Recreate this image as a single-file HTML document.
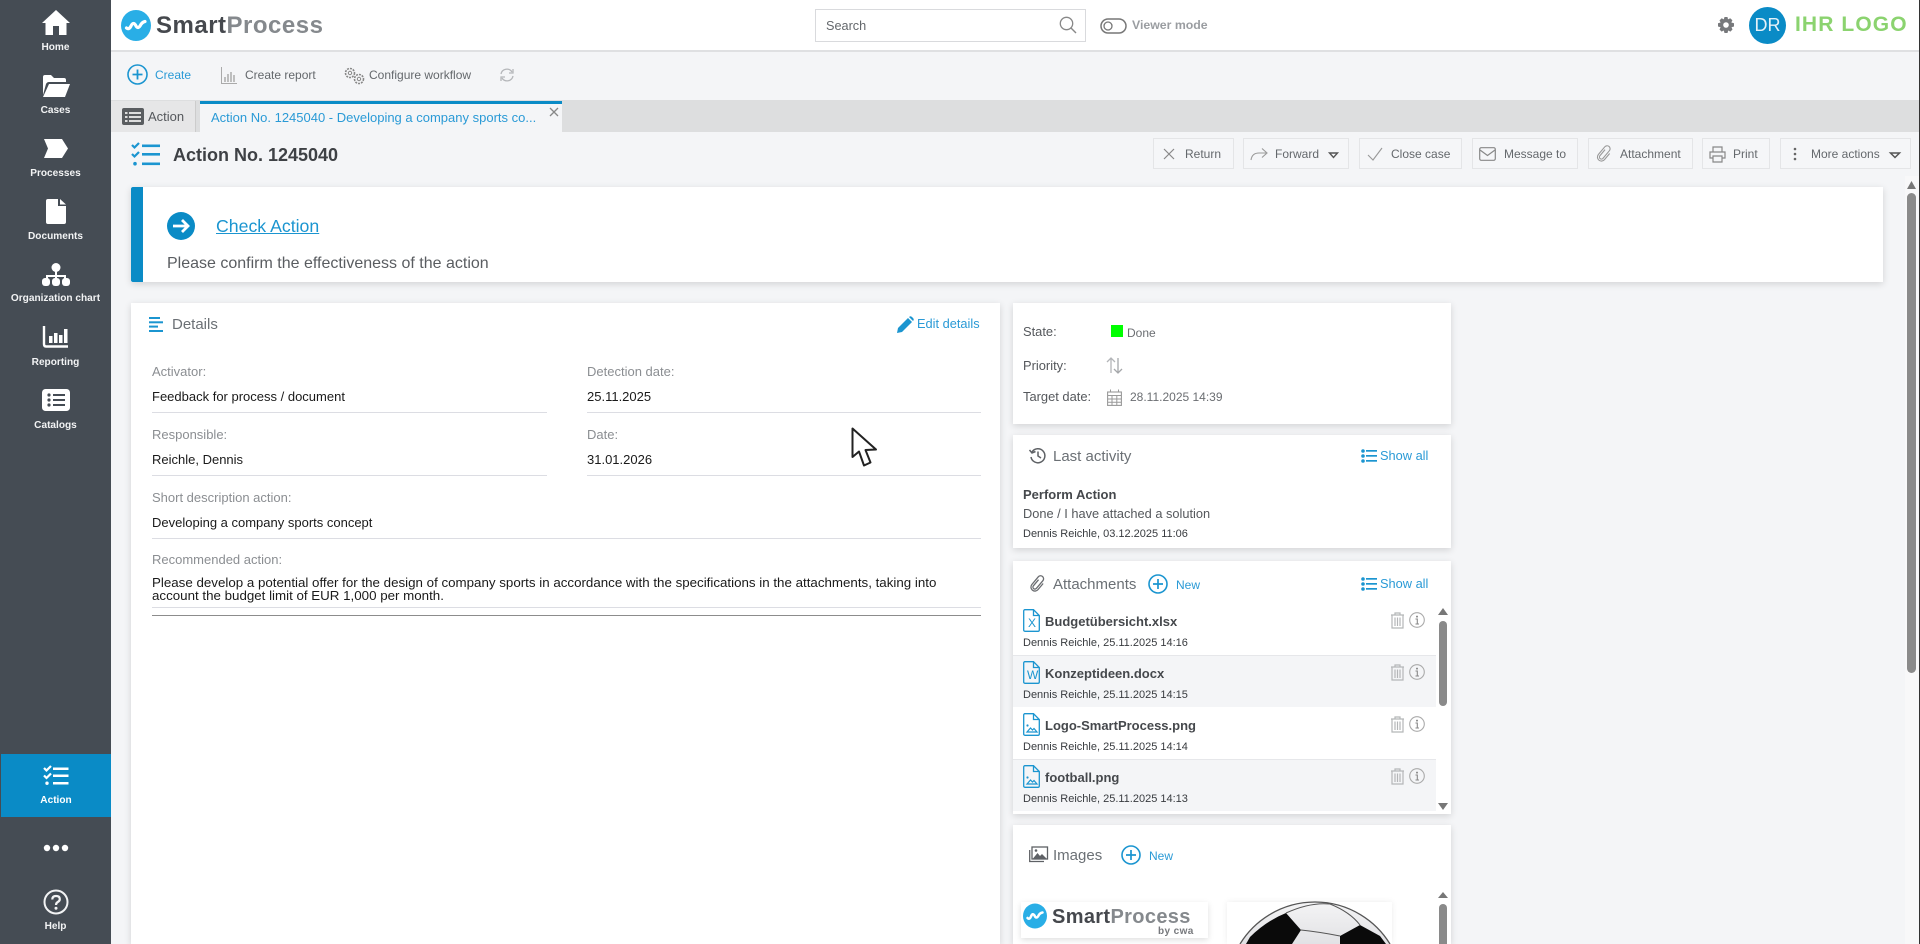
<!DOCTYPE html>
<html><head><meta charset="utf-8"><title>SmartProcess</title>
<style>
html,body{margin:0;padding:0;width:1920px;height:944px;overflow:hidden;background:#f4f5f7;font-family:"Liberation Sans",sans-serif}
#root{position:relative;width:1920px;height:944px;overflow:hidden;background:#f4f5f7}
.t{position:absolute;white-space:nowrap;line-height:16px;height:16px}
.b{position:absolute}
svg{position:absolute;overflow:visible}
.nav{position:absolute;left:0;width:111px;text-align:center;color:#f2f3f4;font-size:10.1px;font-weight:bold;line-height:14px;white-space:nowrap}
.card{position:absolute;background:#fff;box-shadow:0 2px 7px rgba(0,0,0,.14)}
.btn{position:absolute;top:138px;height:31px;border:1px solid #e4e5e7;box-sizing:border-box;background:#f5f6f8}
.l{font-size:13px;color:#8b8e92}
.v{font-size:13px;color:#1a1a1a}
.hr{position:absolute;height:1px;background:#dcdde3}
.bt{font-size:12px;color:#64686c}
.lnk{color:#2a9ad6}
.ttl{font-size:15px;color:#6b7075}
.meta{font-size:11px;color:#383b3f}
.nm{font-size:13px;font-weight:bold;color:#45484c}
.lab{font-size:12.9px;color:#55585c}
</style></head><body><div id="root">

<!-- sidebar -->
<div class="b" style="left:0;top:0;width:111px;height:944px;background:#454c54"></div>
<div class="b" style="left:1px;top:754px;width:110px;height:63px;background:#0a8bc6"></div>

<svg style="left:42px;top:10px" width="28" height="25" viewBox="0 0 28 25"><path d="M14 0 L28 13 L24.5 13 V25 H17 V16 H11 V25 H3.5 V13 H0 Z" fill="#fff"/></svg>
<div class="nav" style="top:41px">Home</div>
<svg style="left:42px;top:75px" width="28" height="22" viewBox="0 0 28 22"><path d="M1 20 V2 Q1 0 3 0 H9 L12 3 H22 Q24 3 24 5 V7 H7 Q5 7 4 9 Z" fill="#fff"/><path d="M7 9 H28 L23 22 H1 Z" fill="#fff"/></svg>
<div class="nav" style="top:104px">Cases</div>
<svg style="left:44px;top:139px" width="24" height="19" viewBox="0 0 24 19"><path d="M0 0 H18 L24 9.5 L18 19 H0 L4 9.5 Z" fill="#fff"/></svg>
<div class="nav" style="top:167px">Processes</div>
<svg style="left:46px;top:199px" width="20" height="25" viewBox="0 0 20 25"><path d="M2 0 H12 V7 H20 V23 Q20 25 18 25 H2 Q0 25 0 23 V2 Q0 0 2 0Z M14 0 L20 5.5 H14Z" fill="#fff"/></svg>
<div class="nav" style="top:230px">Documents</div>
<svg style="left:42px;top:263px" width="28" height="23" viewBox="0 0 28 23"><circle cx="14" cy="4.5" r="4.5" fill="#fff"/><path d="M13 8 H15 V12 H24 V16 H22 V14 H15 V16 H13 V14 H6 V16 H4 V12 H13Z" fill="#fff"/><rect x="0" y="15" width="8" height="8" rx="3" fill="#fff"/><rect x="10" y="15" width="8" height="8" rx="3" fill="#fff"/><rect x="20" y="15" width="8" height="8" rx="3" fill="#fff"/></svg>
<div class="nav" style="top:292px">Organization chart</div>
<svg style="left:43px;top:326px" width="25" height="22" viewBox="0 0 25 22"><path d="M1 0 V18 Q1 20.5 3 20.5 H25" fill="none" stroke="#fff" stroke-width="2.4"/><rect x="6" y="10" width="3.5" height="7" fill="#fff"/><rect x="11" y="7" width="3.5" height="10" fill="#fff"/><rect x="16" y="9" width="3.5" height="8" fill="#fff"/><rect x="21" y="3" width="3.5" height="14" fill="#fff"/></svg>
<div class="nav" style="top:356px">Reporting</div>
<svg style="left:42px;top:389px" width="28" height="22" viewBox="0 0 28 22"><rect width="28" height="22" rx="3.5" fill="#fff"/><g fill="#454c54"><circle cx="7" cy="6" r="1.6"/><circle cx="7" cy="11" r="1.6"/><circle cx="7" cy="16" r="1.6"/><rect x="11" y="5" width="12" height="2"/><rect x="11" y="10" width="12" height="2"/><rect x="11" y="15" width="12" height="2"/></g></svg>
<div class="nav" style="top:419px">Catalogs</div>

<svg style="left:43px;top:765px" width="26" height="21" viewBox="0 0 26 21"><g fill="none" stroke="#fff" stroke-width="2.2"><path d="M1 3 L3.5 5.5 L8 1"/><path d="M1 10.5 L3.5 13 L8 8.5"/></g><g fill="#fff"><rect x="10" y="2.5" width="15.5" height="2.5"/><rect x="10" y="9.5" width="15.5" height="2.5"/><rect x="10" y="17" width="15.5" height="2.5"/><circle cx="4" cy="18.2" r="1.7"/></g></svg>
<div class="nav" style="top:794px;color:#fff;left:1px;width:110px">Action</div>
<svg style="left:43px;top:843px" width="26" height="10" viewBox="0 0 26 10"><circle cx="4" cy="5" r="3.2" fill="#fff"/><circle cx="13" cy="5" r="3.2" fill="#fff"/><circle cx="22" cy="5" r="3.2" fill="#fff"/></svg>
<svg style="left:43px;top:889px" width="26" height="26" viewBox="0 0 26 26"><circle cx="13" cy="13" r="11.5" fill="none" stroke="#f2f3f4" stroke-width="2"/><path d="M9.3 10.5 Q9.3 7 13 7 Q16.8 7 16.8 10 Q16.8 12 14.8 13 Q13 14 13 16" fill="none" stroke="#f2f3f4" stroke-width="2.2"/><circle cx="13" cy="19.3" r="1.5" fill="#f2f3f4"/></svg>
<div class="nav" style="top:920px">Help</div>

<!-- header -->
<div class="b" style="left:111px;top:0;width:1809px;height:50px;background:#fff"></div>
<div class="b" style="left:111px;top:50px;width:1809px;height:2px;background:#dfe0e2"></div>
<svg style="left:121px;top:10px" width="30" height="31" viewBox="0 0 30 31"><ellipse cx="15" cy="15.5" rx="15" ry="15.5" fill="#29aee6"/><path d="M5.5 18 Q8 20 10 16 Q12 11.5 14.5 15 Q16.5 19.5 19 16 Q21 12 24 11.5" fill="none" stroke="#fff" stroke-width="3.2" stroke-linecap="round"/></svg>
<div class="t" style="left:156px;top:14px;height:24px;line-height:24px;font-size:24px;font-weight:bold;color:#45484d;letter-spacing:.5px">Smart<span style="color:#85898d">Process</span></div>

<div class="b" style="left:815px;top:9px;width:271px;height:33px;box-sizing:border-box;border:1px solid #d9dadd;background:#fff"></div>
<div class="t" style="left:826px;top:18px;font-size:12.7px;color:#64686c">Search</div>
<svg style="left:1059px;top:16px" width="18" height="18" viewBox="0 0 18 18"><circle cx="7.5" cy="7.5" r="6.2" fill="none" stroke="#888" stroke-width="1.3"/><path d="M12 12 L17 17" stroke="#888" stroke-width="1.4"/></svg>
<svg style="left:1100px;top:18px" width="27" height="16" viewBox="0 0 27 16"><rect x="1" y="1" width="25" height="14" rx="7" fill="none" stroke="#777" stroke-width="1.5"/><circle cx="8" cy="8" r="4" fill="none" stroke="#777" stroke-width="1.3"/></svg>
<div class="t" style="left:1132px;top:17px;font-size:12.3px;font-weight:bold;color:#9a9da1">Viewer mode</div>

<svg style="left:1718px;top:17px" width="16" height="16" viewBox="0 0 16 16"><path d="M6.5 0 H9.5 L10 2.4 L12.2 1.2 L14.4 3.3 L13.3 5.5 L16 6.2 V9.5 L13.5 10.2 L14.5 12.5 L12.4 14.6 L10.2 13.5 L9.5 16 H6.5 L5.8 13.5 L3.6 14.6 L1.5 12.5 L2.6 10.2 L0 9.5 V6.3 L2.6 5.5 L1.5 3.4 L3.7 1.2 L5.8 2.4Z" fill="#77797c"/><circle cx="8" cy="8" r="2.8" fill="#fff"/></svg>
<div class="b" style="left:1749px;top:7px;width:37px;height:37px;border-radius:50%;background:#0a8bc6;color:#e4f1f8;font-size:18px;line-height:37px;text-align:center">DR</div>
<div class="t" style="left:1795px;top:13px;height:24px;line-height:24px;font-size:21px;font-weight:bold;color:#8bd36f;letter-spacing:1.1px">IHR LOGO</div>
<div class="b" style="left:1919px;top:0;width:1px;height:944px;background:#333;z-index:9"></div>

<!-- toolbar -->
<svg style="left:127px;top:64px" width="21" height="21" viewBox="0 0 21 21"><circle cx="10.5" cy="10.5" r="9.5" fill="none" stroke="#1b95d0" stroke-width="1.6"/><path d="M10.5 5.5 V15.5 M5.5 10.5 H15.5" stroke="#1b95d0" stroke-width="1.8"/></svg>
<div class="t lnk" style="left:155px;top:67px;font-size:12px">Create</div>
<svg style="left:221px;top:67px" width="16" height="17" viewBox="0 0 16 17"><path d="M.5 0 V16.5 H16" fill="none" stroke="#aaa" stroke-width="1"/><path d="M4 15 V10 M7 15 V7 M10 15 V5 M13 15 V8" stroke="#999" stroke-width="1.2"/></svg>
<div class="t bt" style="left:245px;top:67px">Create report</div>
<svg style="left:344px;top:67px" width="22" height="18" viewBox="0 0 22 18"><circle cx="6" cy="6" r="4.5" fill="none" stroke="#888" stroke-width="1.6" stroke-dasharray="2 1"/><circle cx="6" cy="6" r="1.7" fill="none" stroke="#888"/><circle cx="15" cy="12" r="4.5" fill="none" stroke="#888" stroke-width="1.6" stroke-dasharray="2 1"/><circle cx="15" cy="12" r="1.7" fill="none" stroke="#888"/></svg>
<div class="t bt" style="left:369px;top:67px">Configure workflow</div>
<svg style="left:500px;top:68px" width="14" height="14" viewBox="0 0 14 14"><path d="M1 6 A6 6 0 0 1 12 4 M13 8 A6 6 0 0 1 2 10" fill="none" stroke="#b5b7ba" stroke-width="1.3"/><path d="M13 1 V5 H9 M1 13 V9 H5" fill="none" stroke="#b5b7ba" stroke-width="1.3"/></svg>

<!-- tabs -->
<div class="b" style="left:111px;top:100px;width:1809px;height:32px;background:#dddedf"></div>
<div class="b" style="left:111px;top:101px;width:84px;height:31px;background:#e6e6e7;border-right:1px solid #ccc"></div>
<svg style="left:122px;top:108px" width="23" height="18" viewBox="0 0 23 18"><rect width="22" height="17" rx="2" fill="#5a5d60"/><g fill="#ddd"><rect x="3" y="4" width="2.5" height="2"/><rect x="3" y="8" width="2.5" height="2"/><rect x="3" y="12" width="2.5" height="2"/><rect x="7" y="4" width="12" height="2"/><rect x="7" y="8" width="12" height="2"/><rect x="7" y="12" width="12" height="2"/></g></svg>
<div class="t" style="left:148px;top:109px;font-size:13px;color:#55585c">Action</div>
<div class="b" style="left:200px;top:101px;width:362px;height:31px;background:#f4f5f7;border-top:3px solid #0a8bc6;box-sizing:border-box"></div>
<div class="t lnk" style="left:211px;top:110px;font-size:13px">Action No. 1245040 - Developing a company sports co...</div>
<svg style="left:549px;top:107px" width="10" height="10" viewBox="0 0 10 10"><path d="M1 1 L9 9 M9 1 L1 9" stroke="#888" stroke-width="1.3"/></svg>

<!-- title -->
<svg style="left:131px;top:142px" width="29" height="24" viewBox="0 0 29 24"><g fill="none" stroke="#1b95d0" stroke-width="2.2"><path d="M1 3 L3.5 5.5 L8 1"/><path d="M1 12 L3.5 14.5 L8 10"/></g><g fill="#1b95d0"><rect x="11" y="2.5" width="18" height="2.6"/><rect x="11" y="11" width="18" height="2.6"/><rect x="11" y="20.5" width="18" height="2.6"/><circle cx="4" cy="21.7" r="1.8"/></g></svg>
<div class="t" style="left:173px;top:145px;height:20px;line-height:20px;font-size:18px;font-weight:bold;color:#3e4145">Action No. 1245040</div>

<!-- action buttons -->
<div class="btn" style="left:1153px;width:81px"></div>
<svg style="left:1163px;top:148px" width="12" height="12" viewBox="0 0 12 12"><path d="M1 1 L11 11 M11 1 L1 11" stroke="#888" stroke-width="1.2"/></svg>
<div class="t bt" style="left:1185px;top:146px">Return</div>
<div class="btn" style="left:1243px;width:106px"></div>
<svg style="left:1250px;top:147px" width="18" height="14" viewBox="0 0 18 14"><path d="M1 13 Q2 6 9 6 H16 M12 1.5 L17 6 L12 10.5" fill="none" stroke="#999" stroke-width="1.1"/></svg>
<div class="t bt" style="left:1275px;top:146px">Forward</div>
<svg style="left:1328px;top:152px" width="11" height="7" viewBox="0 0 11 7"><path d="M1.5 1 H9.5 L5.5 5.5Z" fill="none" stroke="#555" stroke-width="1.4"/></svg>
<div class="btn" style="left:1359px;width:103px"></div>
<svg style="left:1367px;top:147px" width="16" height="14" viewBox="0 0 16 14"><path d="M1 8 L6 13 L15 1" fill="none" stroke="#999" stroke-width="1.1"/></svg>
<div class="t bt" style="left:1391px;top:146px">Close case</div>
<div class="btn" style="left:1472px;width:106px"></div>
<svg style="left:1479px;top:147px" width="17" height="14" viewBox="0 0 17 14"><rect x=".7" y=".7" width="15.6" height="12.6" rx="1.5" fill="none" stroke="#888" stroke-width="1.2"/><path d="M1 3 L8.5 8.5 L16 3" fill="none" stroke="#888" stroke-width="1.2"/></svg>
<div class="t bt" style="left:1504px;top:146px">Message to</div>
<div class="btn" style="left:1588px;width:105px"></div>
<svg style="left:1598px;top:145px" width="12" height="18" viewBox="0 0 12 18"><path transform="rotate(40 6 9)" d="M4 5 V13 a2 2 0 0 0 4 0 V3 a3 3 0 0 0 -6 0 V13 a4 4 0 0 0 8 0 V5" fill="none" stroke="#999" stroke-width="1.1"/></svg>
<div class="t bt" style="left:1620px;top:146px">Attachment</div>
<div class="btn" style="left:1702px;width:68px"></div>
<svg style="left:1709px;top:146px" width="17" height="17" viewBox="0 0 17 17"><path d="M4 6 V1 H13 V6 M4 12 H1 V6 H16 V12 H13 M4 10 H13 V16 H4Z" fill="none" stroke="#888" stroke-width="1.2"/></svg>
<div class="t bt" style="left:1733px;top:146px">Print</div>
<div class="btn" style="left:1780px;width:131px"></div>
<svg style="left:1793px;top:147px" width="4" height="14" viewBox="0 0 4 14"><circle cx="2" cy="2" r="1.3" fill="#666"/><circle cx="2" cy="7" r="1.3" fill="#666"/><circle cx="2" cy="12" r="1.3" fill="#666"/></svg>
<div class="t bt" style="left:1811px;top:146px">More actions</div>
<svg style="left:1889px;top:152px" width="12" height="7" viewBox="0 0 12 7"><path d="M1.5 1 H10.5 L6 5.5Z" fill="none" stroke="#555" stroke-width="1.5"/></svg>

<!-- outer scrollbar -->
<div class="b" style="left:1905px;top:176px;width:14px;height:768px;background:#f8f8f9"></div>
<svg style="left:1907px;top:181px" width="9" height="8" viewBox="0 0 9 8"><path d="M4.5 0 L9 8 H0Z" fill="#777"/></svg>
<div class="b" style="left:1907px;top:193px;width:9px;height:480px;border-radius:5px;background:#8a8a8a"></div>

<!-- banner -->
<div class="card" style="left:131px;top:187px;width:1752px;height:95px"></div>
<div class="b" style="left:131px;top:187px;width:12px;height:95px;background:#0a8bc6;border-radius:2px 0 0 2px"></div>
<svg style="left:167px;top:212px" width="28" height="28" viewBox="0 0 28 28"><circle cx="14" cy="14" r="14" fill="#0a8bc6"/><path d="M6 14 H21 M15 8 L21 14 L15 20" fill="none" stroke="#fff" stroke-width="2.8"/></svg>
<div class="t" style="left:216px;top:216px;height:20px;line-height:20px;font-size:17.7px;color:#1b95d0;text-decoration:underline">Check Action</div>
<div class="t" style="left:167px;top:256px;font-size:16px;color:#5a5d61">Please confirm the effectiveness of the action</div>

<!-- details card -->
<div class="card" style="left:131px;top:303px;width:869px;height:641px"></div>
<svg style="left:149px;top:317px" width="15" height="15" viewBox="0 0 15 15"><g fill="#1b95d0"><rect width="11" height="2"/><rect y="4.3" width="14" height="2"/><rect y="8.6" width="9" height="2"/><rect y="13" width="14" height="2"/></g></svg>
<div class="t ttl" style="left:172px;top:317px">Details</div>
<svg style="left:897px;top:316px" width="17" height="17" viewBox="0 0 17 17"><path d="M0 17 L1 12 L11 2 L15 6 L5 16Z M12 1 Q13.5 -.5 15 1 L16 2 Q17.5 3.5 16 5 Z" fill="#1b95d0"/></svg>
<div class="t lnk" style="left:917px;top:316px;font-size:12.8px">Edit details</div>

<div class="t l" style="left:152px;top:364px">Activator:</div>
<div class="t v" style="left:152px;top:389px">Feedback for process / document</div>
<div class="hr" style="left:152px;top:412px;width:395px"></div>
<div class="t l" style="left:587px;top:364px">Detection date:</div>
<div class="t v" style="left:587px;top:389px">25.11.2025</div>
<div class="hr" style="left:587px;top:412px;width:394px"></div>

<div class="t l" style="left:152px;top:427px">Responsible:</div>
<div class="t v" style="left:152px;top:452px">Reichle, Dennis</div>
<div class="hr" style="left:152px;top:475px;width:395px"></div>
<div class="t l" style="left:587px;top:427px">Date:</div>
<div class="t v" style="left:587px;top:452px">31.01.2026</div>
<div class="hr" style="left:587px;top:475px;width:394px"></div>

<div class="t l" style="left:152px;top:490px">Short description action:</div>
<div class="t v" style="left:152px;top:515px">Developing a company sports concept</div>
<div class="hr" style="left:152px;top:538px;width:829px"></div>

<div class="t l" style="left:152px;top:552px">Recommended action:</div>
<div class="t v" style="left:152px;top:575px;font-size:13.33px">Please develop a potential offer for the design of company sports in accordance with the specifications in the attachments, taking into</div>
<div class="t v" style="left:152px;top:588px;font-size:13.33px">account the budget limit of EUR 1,000 per month.</div>
<div class="hr" style="left:152px;top:607px;width:829px"></div>
<div class="hr" style="left:152px;top:615px;width:829px;background:#8c8c8c"></div>

<!-- cursor -->
<svg style="left:851px;top:427px;z-index:5" width="27" height="41" viewBox="0 0 27 41"><path d="M1.5 1.5 V30 L8 24.5 L13 38.5 L19.5 35.5 L14.5 23 L25 22.5 Z" fill="#fff" stroke="#222" stroke-width="2" stroke-linejoin="round"/></svg>

<!-- state card -->
<div class="card" style="left:1013px;top:303px;width:438px;height:121px"></div>
<div class="t lab" style="left:1023px;top:324px">State:</div>
<div class="b" style="left:1111px;top:325px;width:12px;height:12px;background:#00ff00"></div>
<div class="t" style="left:1127px;top:325px;font-size:12px;color:#6b6e72">Done</div>
<div class="t lab" style="left:1023px;top:358px">Priority:</div>
<svg style="left:1106px;top:357px" width="17" height="17" viewBox="0 0 17 17"><path d="M5 16 V1 M1 5 L5 1 L9 5" fill="none" stroke="#b3b5b8" stroke-width="1.3"/><path d="M12 1 V16 M8 12 L12 16 L16 12" fill="none" stroke="#a5a7aa" stroke-width="1.3"/></svg>
<div class="t lab" style="left:1023px;top:389px">Target date:</div>
<svg style="left:1107px;top:389px" width="15" height="17" viewBox="0 0 15 17"><rect x=".6" y="3" width="13.8" height="13.4" fill="none" stroke="#999" stroke-width="1.1"/><path d="M.6 6.5 H14.4 M.6 10 H14.4 M.6 13.3 H14.4 M5 6.5 V16.4 M9.8 6.5 V16.4 M3.5 .5 V3.5 M11.5 .5 V3.5" fill="none" stroke="#999" stroke-width="1"/></svg>
<div class="t" style="left:1130px;top:389px;font-size:12px;color:#6b6e72">28.11.2025 14:39</div>

<!-- last activity -->
<div class="card" style="left:1013px;top:435px;width:438px;height:113px"></div>
<svg style="left:1029px;top:447px" width="17" height="17" viewBox="0 0 17 17"><path d="M3 5 A7 7 0 1 1 2 10" fill="none" stroke="#5e6165" stroke-width="1.5"/><path d="M.5 3 L3 6 L6.5 4.5" fill="none" stroke="#5e6165" stroke-width="1.5"/><path d="M9 4.5 V9 L12 11" fill="none" stroke="#5e6165" stroke-width="1.5"/></svg>
<div class="t ttl" style="left:1053px;top:449px">Last activity</div>
<svg style="left:1361px;top:449px" width="16" height="14" viewBox="0 0 16 14"><g fill="#1b95d0"><circle cx="2" cy="2" r="1.8"/><circle cx="2" cy="7" r="1.8"/><circle cx="2" cy="12" r="1.8"/><rect x="5" y="1" width="11" height="1.7"/><rect x="5" y="6" width="11" height="1.7"/><rect x="5" y="11" width="11" height="1.7"/></g></svg>
<div class="t lnk" style="left:1380px;top:448px;font-size:12.8px">Show all</div>
<div class="t nm" style="left:1023px;top:487px;color:#45484c">Perform Action</div>
<div class="t" style="left:1023px;top:506px;font-size:12.8px;color:#55585c">Done / I have attached a solution</div>
<div class="t meta" style="left:1023px;top:526px">Dennis Reichle, 03.12.2025 11:06</div>

<!-- attachments -->
<div class="card" style="left:1013px;top:561px;width:438px;height:253px"></div>
<svg style="left:1031px;top:575px" width="13" height="18" viewBox="0 0 12 18"><path transform="rotate(40 6 9)" d="M4 5 V13 a2 2 0 0 0 4 0 V3 a3 3 0 0 0 -6 0 V13 a4 4 0 0 0 8 0 V5" fill="none" stroke="#6a6c70" stroke-width="1.3"/></svg>
<div class="t ttl" style="left:1053px;top:577px">Attachments</div>
<svg style="left:1148px;top:574px" width="20" height="20" viewBox="0 0 20 20"><circle cx="10" cy="10" r="9" fill="none" stroke="#1b95d0" stroke-width="1.6"/><path d="M10 5 V15 M5 10 H15" stroke="#1b95d0" stroke-width="1.7"/></svg>
<div class="t lnk" style="left:1176px;top:577px;font-size:12px">New</div>
<svg style="left:1361px;top:577px" width="16" height="14" viewBox="0 0 16 14"><g fill="#1b95d0"><circle cx="2" cy="2" r="1.8"/><circle cx="2" cy="7" r="1.8"/><circle cx="2" cy="12" r="1.8"/><rect x="5" y="1" width="11" height="1.7"/><rect x="5" y="6" width="11" height="1.7"/><rect x="5" y="11" width="11" height="1.7"/></g></svg>
<div class="t lnk" style="left:1380px;top:576px;font-size:12.8px">Show all</div>

<div class="b" style="left:1013px;top:655px;width:423px;height:52px;background:#f4f5f7;border-top:1px solid #e6e7ea;box-sizing:border-box"></div>
<div class="b" style="left:1013px;top:759px;width:423px;height:52px;background:#f4f5f7;border-top:1px solid #e6e7ea;box-sizing:border-box"></div>

<svg style="left:1023px;top:609px" width="17" height="23" viewBox="0 0 17 23"><path d="M1.5 .7 H10.5 L16.3 6.5 V21 Q16.3 22.3 15 22.3 H2 Q.7 22.3 .7 21 V2 Q.7 .7 2 .7Z M10.5 .7 V6.5 H16.3" fill="none" stroke="#1b95d0" stroke-width="1.3"/></svg>
<div class="t" style="left:1027px;top:615px;font-size:12px;color:#1b95d0;width:10px;text-align:center">X</div>
<div class="t nm" style="left:1045px;top:614px">Budgetübersicht.xlsx</div>
<div class="t meta" style="left:1023px;top:635px">Dennis Reichle, 25.11.2025 14:16</div>

<svg style="left:1023px;top:661px" width="17" height="23" viewBox="0 0 17 23"><path d="M1.5 .7 H10.5 L16.3 6.5 V21 Q16.3 22.3 15 22.3 H2 Q.7 22.3 .7 21 V2 Q.7 .7 2 .7Z M10.5 .7 V6.5 H16.3" fill="none" stroke="#1b95d0" stroke-width="1.3"/></svg>
<div class="t" style="left:1027px;top:667px;font-size:12px;color:#1b95d0;width:10px;text-align:center">W</div>
<div class="t nm" style="left:1045px;top:666px">Konzeptideen.docx</div>
<div class="t meta" style="left:1023px;top:687px">Dennis Reichle, 25.11.2025 14:15</div>

<svg style="left:1023px;top:713px" width="17" height="23" viewBox="0 0 17 23"><path d="M1.5 .7 H10.5 L16.3 6.5 V21 Q16.3 22.3 15 22.3 H2 Q.7 22.3 .7 21 V2 Q.7 .7 2 .7Z M10.5 .7 V6.5 H16.3" fill="none" stroke="#1b95d0" stroke-width="1.3"/><path d="M4 19 L7.5 15 L9.5 17 L11 15.5 L14 19Z" fill="none" stroke="#1b95d0" stroke-width="1.2"/><circle cx="4.5" cy="12.5" r="1.1" fill="#1b95d0"/></svg>
<div class="t nm" style="left:1045px;top:718px">Logo-SmartProcess.png</div>
<div class="t meta" style="left:1023px;top:739px">Dennis Reichle, 25.11.2025 14:14</div>

<svg style="left:1023px;top:765px" width="17" height="23" viewBox="0 0 17 23"><path d="M1.5 .7 H10.5 L16.3 6.5 V21 Q16.3 22.3 15 22.3 H2 Q.7 22.3 .7 21 V2 Q.7 .7 2 .7Z M10.5 .7 V6.5 H16.3" fill="none" stroke="#1b95d0" stroke-width="1.3"/><path d="M4 19 L7.5 15 L9.5 17 L11 15.5 L14 19Z" fill="none" stroke="#1b95d0" stroke-width="1.2"/><circle cx="4.5" cy="12.5" r="1.1" fill="#1b95d0"/></svg>
<div class="t nm" style="left:1045px;top:770px">football.png</div>
<div class="t meta" style="left:1023px;top:791px">Dennis Reichle, 25.11.2025 14:13</div>

<!-- row actions -->
<svg style="left:1390px;top:612px" width="15" height="17" viewBox="0 0 15 17"><path d="M1 3 H14 M5 3 V1 H10 V3 M2 3 V16 H13 V3 M5 5.5 V14 M7.5 5.5 V14 M10 5.5 V14" fill="none" stroke="#b4b6b8" stroke-width="1.2"/></svg>
<svg style="left:1409px;top:612px" width="16" height="16" viewBox="0 0 16 16"><circle cx="8" cy="8" r="7.3" fill="none" stroke="#aaa" stroke-width="1.1"/><circle cx="8" cy="4.6" r="1" fill="#888"/><path d="M6.5 7 H8.3 V12 M6.5 12 H10" fill="none" stroke="#888" stroke-width="1.1"/></svg>
<svg style="left:1390px;top:664px" width="15" height="17" viewBox="0 0 15 17"><path d="M1 3 H14 M5 3 V1 H10 V3 M2 3 V16 H13 V3 M5 5.5 V14 M7.5 5.5 V14 M10 5.5 V14" fill="none" stroke="#b4b6b8" stroke-width="1.2"/></svg>
<svg style="left:1409px;top:664px" width="16" height="16" viewBox="0 0 16 16"><circle cx="8" cy="8" r="7.3" fill="none" stroke="#aaa" stroke-width="1.1"/><circle cx="8" cy="4.6" r="1" fill="#888"/><path d="M6.5 7 H8.3 V12 M6.5 12 H10" fill="none" stroke="#888" stroke-width="1.1"/></svg>
<svg style="left:1390px;top:716px" width="15" height="17" viewBox="0 0 15 17"><path d="M1 3 H14 M5 3 V1 H10 V3 M2 3 V16 H13 V3 M5 5.5 V14 M7.5 5.5 V14 M10 5.5 V14" fill="none" stroke="#b4b6b8" stroke-width="1.2"/></svg>
<svg style="left:1409px;top:716px" width="16" height="16" viewBox="0 0 16 16"><circle cx="8" cy="8" r="7.3" fill="none" stroke="#aaa" stroke-width="1.1"/><circle cx="8" cy="4.6" r="1" fill="#888"/><path d="M6.5 7 H8.3 V12 M6.5 12 H10" fill="none" stroke="#888" stroke-width="1.1"/></svg>
<svg style="left:1390px;top:768px" width="15" height="17" viewBox="0 0 15 17"><path d="M1 3 H14 M5 3 V1 H10 V3 M2 3 V16 H13 V3 M5 5.5 V14 M7.5 5.5 V14 M10 5.5 V14" fill="none" stroke="#b4b6b8" stroke-width="1.2"/></svg>
<svg style="left:1409px;top:768px" width="16" height="16" viewBox="0 0 16 16"><circle cx="8" cy="8" r="7.3" fill="none" stroke="#aaa" stroke-width="1.1"/><circle cx="8" cy="4.6" r="1" fill="#888"/><path d="M6.5 7 H8.3 V12 M6.5 12 H10" fill="none" stroke="#888" stroke-width="1.1"/></svg>

<!-- attachments scrollbar -->
<svg style="left:1438px;top:608px" width="10" height="7" viewBox="0 0 10 7"><path d="M5 0 L10 7 H0Z" fill="#777"/></svg>
<div class="b" style="left:1439px;top:621px;width:8px;height:85px;border-radius:4px;background:#8a8a8a"></div>
<svg style="left:1438px;top:803px" width="10" height="7" viewBox="0 0 10 7"><path d="M0 0 H10 L5 7Z" fill="#777"/></svg>

<!-- images -->
<div class="card" style="left:1013px;top:825px;width:438px;height:119px"></div>
<svg style="left:1029px;top:846px" width="19" height="17" viewBox="0 0 19 17"><rect x="3" y="1" width="15.5" height="12" fill="none" stroke="#5e6165" stroke-width="1.3"/><path d="M.7 4 V15.5 H15" fill="none" stroke="#5e6165" stroke-width="1.3"/><path d="M4 12.5 L8.5 7 L11 10 L13 8 L17.5 12.5Z" fill="#5e6165"/><circle cx="7" cy="4.5" r="1.3" fill="#5e6165"/></svg>
<div class="t ttl" style="left:1053px;top:848px">Images</div>
<svg style="left:1121px;top:845px" width="20" height="20" viewBox="0 0 20 20"><circle cx="10" cy="10" r="9" fill="none" stroke="#1b95d0" stroke-width="1.6"/><path d="M10 5 V15 M5 10 H15" stroke="#1b95d0" stroke-width="1.7"/></svg>
<div class="t lnk" style="left:1149px;top:848px;font-size:12px">New</div>

<div class="b" style="left:1021px;top:902px;width:187px;height:36px;background:#fff;box-shadow:0 2px 6px rgba(0,0,0,.13)"></div>
<svg style="left:1023px;top:903px" width="24" height="26" viewBox="0 0 24 26"><ellipse cx="12" cy="13" rx="12" ry="12.5" fill="#29aee6"/><path d="M4.5 15 Q6.5 17 8 13.5 Q9.5 9.5 11.5 12.5 Q13 16 15 13.5 Q16.5 10 19.5 9.5" fill="none" stroke="#fff" stroke-width="2.5" stroke-linecap="round"/></svg>
<div class="t" style="left:1052px;top:905px;height:24px;line-height:24px;font-size:20px;font-weight:bold;color:#45484d;letter-spacing:.35px">Smart<span style="color:#85898d">Process</span></div>
<div class="t" style="left:1158px;top:924px;font-size:10px;font-weight:bold;color:#77797d;letter-spacing:.4px">by cwa</div>

<div class="b" style="left:1227px;top:902px;width:165px;height:42px;background:#fff;box-shadow:0 0 6px rgba(0,0,0,.08)"></div>
<svg style="left:1227px;top:900px" width="173" height="44" viewBox="1227 900 173 44">
<defs><linearGradient id="g" x1="0" y1="0" x2="0" y2="1"><stop offset="0" stop-color="#f4f4f5"/><stop offset="1" stop-color="#e2e2e5"/></linearGradient></defs>
<path d="M1240 944 A88 88 0 0 1 1390 944Z" fill="url(#g)"/>
<path d="M1240 944 A88 88 0 0 1 1390 944" fill="none" stroke="#555" stroke-width="1.3"/>
<path d="M1286 913 L1301 930 L1292 944 L1246 944 L1250 937 Q1266 921 1286 913Z" fill="#0a0a0a"/>
<path d="M1360 925 L1380 936 L1386 944 L1340 944 L1340 936Z" fill="#0a0a0a"/>
<path d="M1301 930 Q1320 932 1340 936 M1286 913 Q1310 902 1330 904 M1360 925 Q1350 912 1330 904" fill="none" stroke="#555" stroke-width="1"/>
</svg>
<svg style="left:1438px;top:892px" width="10" height="6" viewBox="0 0 10 6"><path d="M5 0 L10 6 H0Z" fill="#777"/></svg>
<div class="b" style="left:1439px;top:904px;width:8px;height:40px;border-radius:4px 4px 0 0;background:#8a8a8a"></div>

</div></body></html>
